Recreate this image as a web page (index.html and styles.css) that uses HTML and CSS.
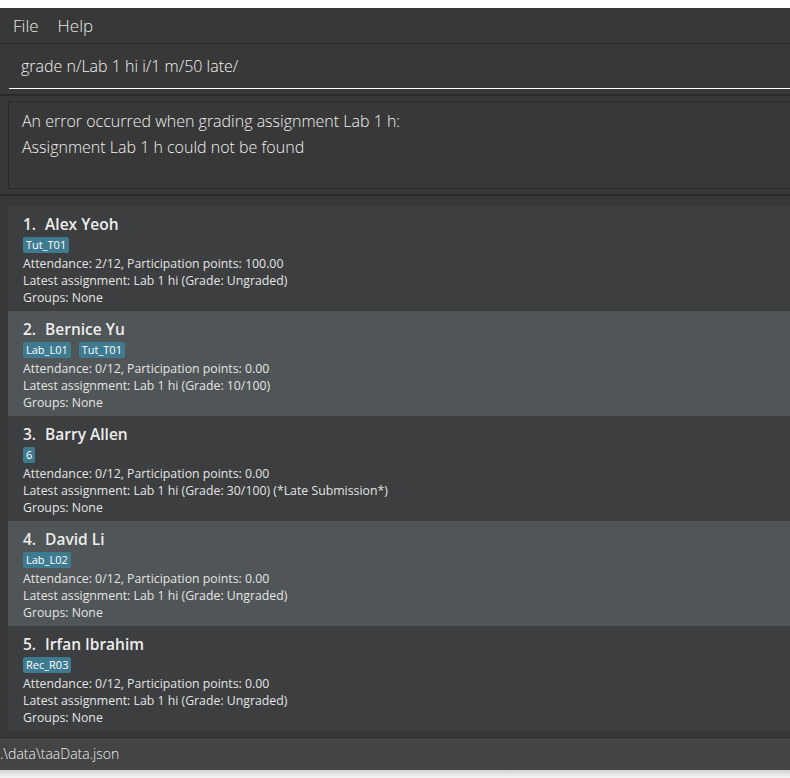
FILE: index.html
```html
<!DOCTYPE html>
<html>
<head>
<meta charset="utf-8">
<link rel="stylesheet" href="styles.css">
</head>
<body>
<div class="window">
  <div class="menubar">
    <span class="menu">File</span>
    <span class="menu">Help</span>
  </div>
  <div class="command">
    <div class="command-input">grade n/Lab 1 hi i/1 m/50 late/</div>
  </div>
  <div class="result-pane">
    <div class="result-box">
      <div>An error occurred when grading assignment Lab 1 h:</div>
      <div>Assignment Lab 1 h could not be found</div>
    </div>
  </div>
  <div class="list-pane">
    <div class="card odd">
      <div class="name"><span class="idx">1.</span>Alex Yeoh</div>
      <div class="tags"><span class="tag">Tut_T01</span></div>
      <div class="line">Attendance: 2/12, Participation points: 100.00</div>
      <div class="line">Latest assignment: Lab 1 hi (Grade: Ungraded)</div>
      <div class="line">Groups: None</div>
    </div>
    <div class="card even">
      <div class="name"><span class="idx">2.</span>Bernice Yu</div>
      <div class="tags"><span class="tag">Lab_L01</span><span class="tag">Tut_T01</span></div>
      <div class="line">Attendance: 0/12, Participation points: 0.00</div>
      <div class="line">Latest assignment: Lab 1 hi (Grade: 10/100)</div>
      <div class="line">Groups: None</div>
    </div>
    <div class="card odd">
      <div class="name"><span class="idx">3.</span>Barry Allen</div>
      <div class="tags"><span class="tag">6</span></div>
      <div class="line">Attendance: 0/12, Participation points: 0.00</div>
      <div class="line">Latest assignment: Lab 1 hi (Grade: 30/100) (*Late Submission*)</div>
      <div class="line">Groups: None</div>
    </div>
    <div class="card even">
      <div class="name"><span class="idx">4.</span>David Li</div>
      <div class="tags"><span class="tag">Lab_L02</span></div>
      <div class="line">Attendance: 0/12, Participation points: 0.00</div>
      <div class="line">Latest assignment: Lab 1 hi (Grade: Ungraded)</div>
      <div class="line">Groups: None</div>
    </div>
    <div class="card odd">
      <div class="name"><span class="idx">5.</span>Irfan Ibrahim</div>
      <div class="tags"><span class="tag">Rec_R03</span></div>
      <div class="line">Attendance: 0/12, Participation points: 0.00</div>
      <div class="line">Latest assignment: Lab 1 hi (Grade: Ungraded)</div>
      <div class="line">Groups: None</div>
    </div>
  </div>
  <div class="statusbar">.\data\taaData.json</div>
</div>
<div class="shadow"></div>
</body>
</html>
```

FILE: styles.css
```css
html, body {
  margin: 0;
  padding: 0;
  background: #ffffff;
  width: 790px;
  height: 778px;
  overflow: hidden;
}

.window {
  margin-top: 8px;
  background: #383838;
  height: 761px;
  display: flex;
  flex-direction: column;
  font-family: "Open Sans", "Noto Sans", sans-serif;
  color: #ffffff;
}

.menubar {
  height: 36px;
  flex: none;
  box-sizing: border-box;
  border-bottom: 1px solid #2b2b2b;
  display: flex;
  align-items: center;
  gap: 19px;
  padding-left: 13px;
  font-size: 17px;
  font-weight: 300;
  color: #e8e8e8;
}

.command {
  height: 52px;
  flex: none;
  box-sizing: border-box;
  border-bottom: 2px solid #2b2b2b;
  padding: 0 0 0 9px;
}

.command-input {
  height: 45px;
  box-sizing: border-box;
  border-bottom: 1px solid #ffffff;
  padding: 11px 0 0 12px;
  font-size: 16px;
  font-weight: 300;
  color: #f2f2f2;
}

.result-pane {
  height: 100px;
  flex: none;
  box-sizing: border-box;
  padding: 5px 0 5px 8px;
  border-bottom: 2px solid #2b2b2b;
}

.result-box {
  height: 88px;
  box-sizing: border-box;
  border: 1px solid #2b2b2b;
  border-right: none;
  padding: 6px 0 0 13px;
  font-size: 16px;
  font-weight: 300;
  line-height: 26px;
  color: #f0f0f0;
}

.list-pane {
  height: 542px;
  flex: none;
  box-sizing: border-box;
  padding: 10px 0 0 8px;
  border-bottom: 1px solid #2b2b2b;
}

.card {
  height: 105px;
  box-sizing: border-box;
  padding: 8px 0 0 15px;
  color: #e4e4e4;
}

.card.odd { background: #3c3e3f; }
.card.even { background: #505557; }

.name {
  font-size: 15.5px;
  font-weight: 600;
  line-height: 20px;
  color: #ededed;
}

.idx {
  margin-right: 9px;
}

.tags {
  display: flex;
  gap: 8px;
  margin: 3px 0 2px;
}

.tag {
  background: #3e7b91;
  color: #ffffff;
  font-size: 11px;
  line-height: 16px;
  padding: 0 3px;
  border-radius: 2px;
}

.line {
  font-size: 12.3px;
  line-height: 17px;
}

.statusbar {
  flex: 1;
  background: #444444;
  font-size: 14px;
  font-weight: 300;
  line-height: 32px;
  color: #eeeeee;
  padding-left: 0;
}

.shadow {
  height: 9px;
  background: linear-gradient(#cfcfcf, #f5f5f5);
}
```
